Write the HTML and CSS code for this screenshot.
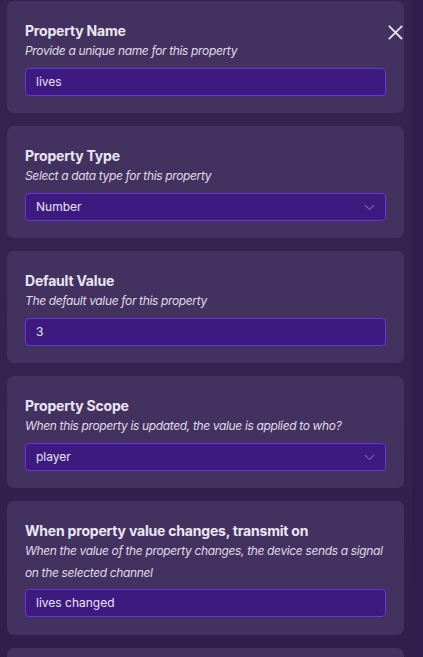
FILE: index.html
```html
<!DOCTYPE html>
<html>
<head>
<meta charset="utf-8">
<link rel="stylesheet" href="styles.css">
</head>
<body>
<div class="panel">
  <div class="list">
    <section class="card">
      <h2 class="title">Property Name</h2>
      <p class="desc">Provide a unique name for this property</p>
      <div class="field">lives</div>
      <button class="close" aria-label="Close">
        <svg width="15" height="15" viewBox="0 0 15 15"><path d="M1.5 1.5 L13.5 13.5 M13.5 1.5 L1.5 13.5" stroke="#e4dfea" stroke-width="1.8" stroke-linecap="square" fill="none"/></svg>
      </button>
    </section>
    <section class="card">
      <h2 class="title">Property Type</h2>
      <p class="desc">Select a data type for this property</p>
      <div class="field select">Number
        <svg class="chev" width="11" height="7" viewBox="0 0 11 7"><path d="M1 1 L5.5 5.5 L10 1" stroke="#75609e" stroke-width="1.1" fill="none"/></svg>
      </div>
    </section>
    <section class="card">
      <h2 class="title">Default Value</h2>
      <p class="desc">The default value for this property</p>
      <div class="field">3</div>
    </section>
    <section class="card">
      <h2 class="title">Property Scope</h2>
      <p class="desc">When this property is updated, the value is applied to who?</p>
      <div class="field select">player
        <svg class="chev" width="11" height="7" viewBox="0 0 11 7"><path d="M1 1 L5.5 5.5 L10 1" stroke="#75609e" stroke-width="1.1" fill="none"/></svg>
      </div>
    </section>
    <section class="card">
      <h2 class="title">When property value changes, transmit on</h2>
      <p class="desc">When the value of the property changes, the device sends a signal on the selected channel</p>
      <div class="field">lives changed</div>
    </section>
    <section class="card">
      <h2 class="title">&nbsp;</h2>
    </section>
  </div>
</div>
</body>
</html>
```
FILE: styles.css
```css
* { box-sizing: border-box; }
html, body {
  margin: 0;
  padding: 0;
  height: 100%;
  overflow: hidden;
}
body {
  background: #2f1e4b;
  font-family: Inter, "Noto Sans", sans-serif;
  color: #e8e3ef;
}
.panel {
  width: 412px;
  height: 657px;
  background: linear-gradient(180deg, #35244f 0%, #34234f 60%, #2f1f4a 100%);
  padding: 1px 0 0 7px;
}
.list {
  display: flex;
  flex-direction: column;
  gap: 13px;
  width: 397px;
}
.card {
  position: relative;
  background: #433260;
  border-radius: 7px;
  padding: 20px 18px 17.4px 18px;
}
.title {
  margin: 0;
  font-size: 14px;
  line-height: 19px;
  font-weight: 700;
  color: #ebe6f1;
  letter-spacing: -0.2px;
}
.desc {
  margin: 0 0 6px 0;
  font-size: 12px;
  line-height: 21.6px;
  font-style: italic;
  color: #e0dae8;
  letter-spacing: -0.35px;
}
.field {
  position: relative;
  height: 28px;
  background: #3d1a7f;
  border: 1px solid #6a33d6;
  border-radius: 4px;
  padding: 0 10px;
  font-size: 12px;
  line-height: 26px;
  color: #eae5f2;
}
.chev {
  position: absolute;
  right: 10px;
  top: 10px;
}
.close {
  position: absolute;
  top: 24px;
  right: 1px;
  width: 15px;
  height: 15px;
  padding: 0;
  border: 0;
  background: none;
  display: block;
}
.close svg { display: block; }
```
